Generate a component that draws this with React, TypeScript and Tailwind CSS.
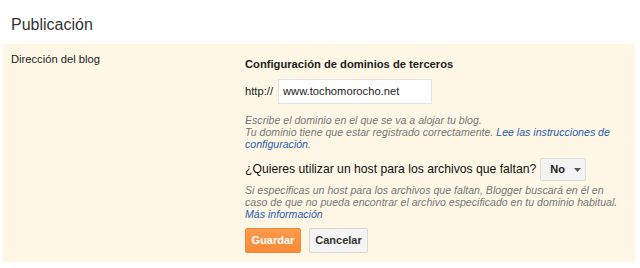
import React from "react";

export default function App() {
  return (
    <div className="w-[640px] h-[268px] bg-white font-['Liberation_Sans',Arial,sans-serif] overflow-hidden">
      <div className="h-[44px] pl-[11px] pt-[15px] text-[16px] leading-[19px] text-[#333]">Publicación</div>
      <div className="ml-[3px] w-[632px] h-[218px] bg-[#fef7e6] flex">
        <div className="w-[242px] pl-[8px] pt-[9px] text-[11.2px] leading-[13px] text-[#222]">
          Dirección del blog
        </div>
        <div className="flex-1 pt-[14px] pr-[7px] flex flex-col">
          <div className="text-[11.2px] leading-[13px] font-bold text-[#222]">
            Configuración de dominios de terceros
          </div>
          <div className="mt-[8px] flex items-center h-[25px]">
            <span className="text-[11.2px] text-[#222]">http://</span>
            <div className="ml-[5px] w-[154px] h-[25px] bg-white border border-[#e3e3e3] flex items-center pl-[4px] text-[11.2px] text-[#222]">
              www.tochomorocho.net
            </div>
          </div>
          <div className="mt-[10px] text-[10.6px] leading-[12px] italic text-[#777] whitespace-nowrap">
            Escribe el dominio en el que se va a alojar tu blog.
            <br />
            Tu dominio tiene que estar registrado correctamente.{" "}
            <span className="text-[#2a5db0]">Lee las instrucciones de</span>
            <br />
            <span className="text-[#2a5db0]">configuración</span>.
          </div>
          <div className="mt-[8px] flex items-center h-[23px]">
            <span className="text-[12.2px] text-[#111]">¿Quieres utilizar un host para los archivos que faltan?</span>
            <div className="ml-[4px] w-[46px] h-[23px] bg-[#f3f3f3] border border-[#dcdcdc] rounded-[2px] flex items-center pl-[9px] gap-[9px]">
              <span className="text-[11px] font-bold text-[#222]">No</span>
              <svg width="7" height="4" viewBox="0 0 7 4">
                <path d="M0 0 L7 0 L3.5 4 Z" fill="#555" />
              </svg>
            </div>
          </div>
          <div className="mt-[3px] text-[10.6px] leading-[12px] italic text-[#777] whitespace-nowrap">
            Si especificas un host para los archivos que faltan, Blogger buscará en él en
            <br />
            caso de que no pueda encontrar el archivo especificado en tu dominio habitual.
            <br />
            <span className="text-[#2a5db0]">Más información</span>
          </div>
          <div className="mt-[8px] flex gap-[8px]">
            <button className="w-[56px] h-[25px] rounded-[2px] border border-[#f08a3a] bg-gradient-to-b from-[#fd9a4c] to-[#f88a35] text-white text-[11px] font-bold">
              Guardar
            </button>
            <button className="w-[59px] h-[25px] rounded-[2px] border border-[#d8d8d8] bg-[#f4f4f4] text-[#333] text-[11px] font-bold">
              Cancelar
            </button>
          </div>
        </div>
      </div>
    </div>
  );
}
